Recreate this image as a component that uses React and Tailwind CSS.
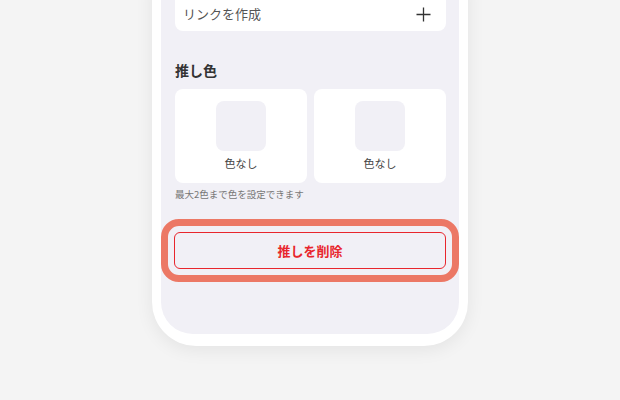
import React from 'react';

const font = { fontFamily: '"Noto Sans CJK JP", "Noto Sans", sans-serif' };

const ColorSlot = () => (
    <div className="flex-1 bg-white rounded-[8px] h-[94px] flex flex-col items-center pt-[12px]">
        <div className="w-[50px] h-[50px] rounded-[8px] bg-[#f1f0f6]" />
        <p className="mt-[4px] text-[11px] leading-[16px] text-[#444]">色なし</p>
    </div>
);

const App = () => {
    return (
        <div className="w-[620px] h-[400px] bg-[#f4f4f4] overflow-hidden flex justify-center" style={font}>
            <div className="w-[316px] -mt-[20px] self-start bg-white rounded-b-[44px] px-[9px] pb-[12px] shadow-[0_4px_18px_rgba(0,0,0,0.07)]">
                <div className="bg-[#f1f0f6] rounded-b-[32px] pl-[14px] pr-[13px] pb-[52px]">
                    <div className="bg-white rounded-b-[8px] pt-[17px]">
                        <div className="h-[34px] flex items-center justify-between pl-[8px] pr-[15px]">
                            <span className="text-[13px] text-[#555]">リンクを作成</span>
                            <svg width="15" height="15" viewBox="0 0 15 15">
                                <path d="M7.5 0.5v14M0.5 7.5h14" stroke="#333" strokeWidth="1.3" />
                            </svg>
                        </div>
                    </div>

                    <h3 className="mt-[29px] text-[14px] leading-[20px] font-bold text-[#333]">推し色</h3>
                    <div className="mt-[9px] flex gap-[7px]">
                        <ColorSlot />
                        <ColorSlot />
                    </div>
                    <p className="mt-[4px] text-[9.5px] leading-[14px] text-[#777]">最大2色まで色を設定できます</p>

                    <div className="mt-[18px] -ml-[14px] -mr-[13px] border-[7px] border-[#ec7865] rounded-[18px] p-[6px]">
                        <button className="w-full h-[37px] rounded-[6px] border-[1.5px] border-[#e8262d] text-[13px] font-bold text-[#e8262d]">
                            推しを削除
                        </button>
                    </div>
                </div>
            </div>
        </div>
    );
};

export default App;
